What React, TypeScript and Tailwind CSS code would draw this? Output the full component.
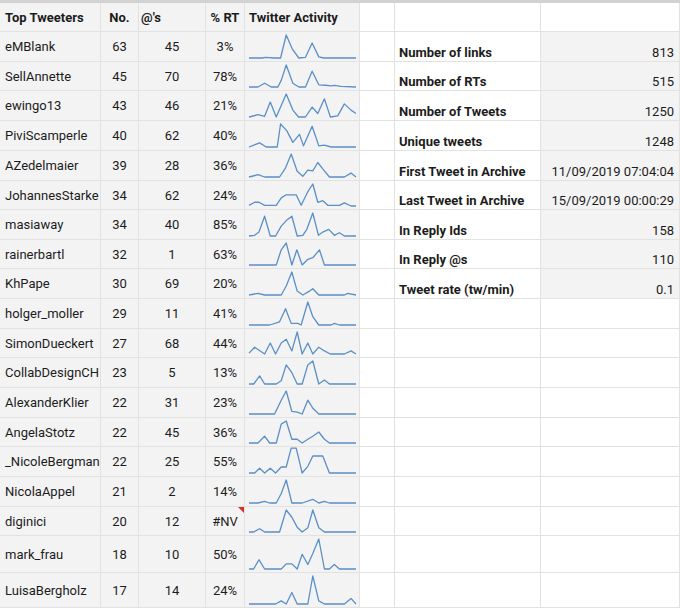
import type { ReactNode } from 'react';

type Tweeter = {
  name: string;
  no: number;
  ats: number;
  rt: string;
  h: string;
  pts: [number, number][];
  flag?: boolean;
};

const COLS =
  'grid grid-cols-[101px_38px_67px_39px_115px_35px_146px_139px]';

const TWEETERS: Tweeter[] = [
  { name: 'eMBlank', no: 63, ats: 45, rt: '3%', h: 'h-[30px]', pts: [[0, 0], [40, 0], [50, 0.03], [75, 0], [95, 0], [112, 1], [130, 0.4], [150, 0], [170, 0.03], [190, 0.65], [210, 0.05], [225, 0], [322, 0]] },
  { name: 'SellAnnette', no: 45, ats: 70, rt: '78%', h: 'h-[29px]', pts: [[0, 0], [27, 0], [47, 0.17], [67, 0], [87, 0], [97, 0.3], [112, 1], [132, 0.17], [150, 0], [170, 0], [190, 0.72], [210, 0.1], [230, 0.08], [247, 0.05], [257, 0.07], [277, 0.03], [322, 0]] },
  { name: 'ewingo13', no: 43, ats: 46, rt: '21%', h: 'h-[30px]', pts: [[0, 0], [27, 0.1], [47, 0.03], [64, 0.65], [82, 0], [112, 1], [132, 0.3], [149, 0], [170, 0], [190, 0.43], [207, 0.15], [227, 0.79], [245, 0], [267, 0.05], [287, 0.57], [307, 0.3], [322, 0.15]] },
  { name: 'PiviScamperle', no: 40, ats: 62, rt: '40%', h: 'h-[30px]', pts: [[0, 0], [32, 0.18], [52, 0], [85, 0], [95, 1], [114, 0.7], [132, 0.2], [152, 0.55], [164, 0.05], [190, 0.9], [210, 0.05], [227, 0.08], [247, 0], [322, 0]] },
  { name: 'AZedelmaier', no: 39, ats: 28, rt: '36%', h: 'h-[30px]', pts: [[0, 0], [27, 0.1], [47, 0], [92, 0], [110, 0.4], [127, 1], [145, 0.25], [162, 0.03], [177, 0.3], [192, 0.27], [207, 0.63], [222, 0.35], [242, 0], [287, 0], [307, 0.17], [322, 0]] },
  { name: 'JohannesStarke', no: 34, ats: 62, rt: '24%', h: 'h-[29px]', pts: [[0, 0.03], [17, 0.17], [30, 0.17], [47, 0.03], [82, 0.03], [97, 0.37], [112, 0.51], [142, 0.51], [157, 0.03], [177, 0.65], [192, 1], [207, 0.17], [222, 0.24], [237, 0.03], [272, 0.03], [287, 0.14], [307, 0], [322, 0]] },
  { name: 'masiaway', no: 34, ats: 40, rt: '85%', h: 'h-[30px]', pts: [[0, 0], [17, 0.03], [30, 0.17], [47, 0.86], [64, 0], [80, 0], [97, 0.43], [112, 0.67], [129, 0.86], [145, 0], [162, 0.03], [174, 0.29], [192, 1], [209, 0.03], [222, 0.17], [240, 0.29], [257, 0.03], [272, 0.14], [287, 0], [322, 0]] },
  { name: 'rainerbartl', no: 32, ats: 1, rt: '63%', h: 'h-[29px]', pts: [[0, 0], [82, 0], [97, 0.69], [112, 1], [129, 0], [144, 0.69], [160, 0], [177, 0.26], [192, 0.33], [212, 0.69], [227, 0], [322, 0]] },
  { name: 'KhPape', no: 30, ats: 69, rt: '20%', h: 'h-[30px]', pts: [[0, 0], [27, 0.07], [47, 0], [97, 0], [112, 0.39], [129, 1], [145, 0.17], [162, 0], [182, 0.17], [192, 0.27], [210, 0], [287, 0], [297, 0.07], [322, 0]] },
  { name: 'holger_moller', no: 29, ats: 11, rt: '41%', h: 'h-[30px]', pts: [[0, 0], [62, 0], [92, 0.14], [110, 0.71], [127, 0.07], [147, 0.07], [157, 0], [177, 1], [192, 0.36], [210, 0], [247, 0], [257, 0.07], [272, 0], [322, 0]] },
  { name: 'SimonDueckert', no: 27, ats: 68, rt: '44%', h: 'h-[29px]', pts: [[0, 0.04], [17, 0.31], [47, 0], [64, 0.5], [80, 0], [97, 0.5], [112, 0.67], [129, 0.14], [145, 1], [160, 0], [177, 0.5], [192, 0], [210, 0.31], [227, 0.14], [245, 0], [287, 0], [307, 0.14], [322, 0]] },
  { name: 'CollabDesignCH', no: 23, ats: 5, rt: '13%', h: 'h-[30px]', pts: [[0, 0], [14, 0], [32, 0.35], [47, 0], [82, 0], [97, 0.14], [112, 0.83], [129, 0.49], [145, 0], [160, 0], [177, 0.83], [192, 1], [210, 0], [227, 0.17], [242, 0], [322, 0]] },
  { name: 'AlexanderKlier', no: 22, ats: 31, rt: '23%', h: 'h-[30px]', pts: [[0, 0], [77, 0], [97, 0.6], [112, 1], [129, 0.11], [145, 0.08], [160, 0], [177, 0.6], [192, 0.25], [210, 0], [322, 0]] },
  { name: 'AngelaStotz', no: 22, ats: 45, rt: '36%', h: 'h-[29px]', pts: [[0, 0], [27, 0], [47, 0.31], [62, 0], [82, 0], [97, 0.86], [112, 1], [129, 0.17], [145, 0.17], [160, 0], [177, 0.17], [192, 0.31], [210, 0.5], [227, 0.17], [242, 0], [322, 0]] },
  { name: '_NicoleBergmann', no: 22, ats: 25, rt: '55%', h: 'h-[30px]', pts: [[0, 0], [17, 0], [32, 0.21], [47, 0], [64, 0.21], [80, 0], [97, 0.26], [112, 0.26], [127, 1.08], [142, 1.08], [160, 0], [177, 0.29], [192, 0.74], [222, 0.74], [242, 0], [322, 0]] },
  { name: 'NicolaAppel', no: 21, ats: 2, rt: '14%', h: 'h-[30px]', pts: [[0, 0], [27, 0], [47, 0.07], [62, 0], [82, 0], [97, 0.41], [112, 1], [129, 0], [160, 0], [192, 0.16], [210, 0], [227, 0.07], [242, 0], [322, 0]] },
  { name: 'diginici', no: 20, ats: 12, rt: '#NV', h: 'h-[29px]', flag: true, pts: [[0, 0], [14, 0], [32, 0.15], [47, 0], [92, 0], [112, 1], [129, 0.67], [145, 0.22], [160, 0], [177, 0.19], [192, 1], [210, 0.19], [227, 0], [322, 0]] },
  { name: 'mark_frau', no: 18, ats: 10, rt: '50%', h: 'h-[37px]', pts: [[0, 0], [14, 0], [30, 0.31], [47, 0], [97, 0], [112, 0.17], [129, 0.17], [145, 0], [160, 0.49], [177, 0.15], [192, 0.52], [210, 1], [227, 0], [242, 0], [257, 0.15], [272, 0], [322, 0]] },
  { name: 'LuisaBergholz', no: 17, ats: 14, rt: '24%', h: 'h-[35px]', pts: [[0, 0], [80, 0], [97, 0.11], [112, 0], [129, 0.41], [145, 0], [177, 0], [192, 1], [210, 0.11], [227, 0], [287, 0], [307, 0.2], [322, 0]] },
];

const STATS: [string, string][] = [
  ['Number of links', '813'],
  ['Number of RTs', '515'],
  ['Number of Tweets', '1250'],
  ['Unique tweets', '1248'],
  ['First Tweet in Archive', '11/09/2019 07:04:04'],
  ['Last Tweet in Archive', '15/09/2019 00:00:29'],
  ['In Reply Ids', '158'],
  ['In Reply @s', '110'],
  ['Tweet rate (tw/min)', '0.1'],
];

function Cell({ className = '', children }: { className?: string; children?: ReactNode }) {
  return (
    <div
      className={`flex min-w-0 overflow-hidden whitespace-nowrap border-b border-r border-[#e2e2e2] ${className}`}
    >
      {children}
    </div>
  );
}

function Sparkline({ pts }: { pts: [number, number][] }) {
  const points = pts.map(([x, v]) => `${x},${(1 - v) * 100}`).join(' ');
  return (
    <svg
      viewBox="0 0 322 100"
      preserveAspectRatio="none"
      className="block h-full w-full overflow-visible"
    >
      <polyline
        points={points}
        fill="none"
        stroke="#5b8fca"
        strokeWidth={1.3}
        strokeLinejoin="round"
        vectorEffect="non-scaling-stroke"
      />
    </svg>
  );
}

function StatCells({ stat }: { stat?: [string, string] }) {
  return (
    <>
      <Cell className="bg-white" />
      <Cell className="items-end bg-white px-[4px] pb-[1px] font-bold">
        {stat?.[0]}
      </Cell>
      <Cell
        className={`items-end justify-end px-[5px] pb-[1px] ${stat ? 'bg-[#f3f3f3]' : 'bg-white'}`}
      >
        {stat?.[1]}
      </Cell>
    </>
  );
}

export default function App() {
  return (
    <div className="h-[610px] w-[680px] overflow-hidden bg-white font-['Roboto',sans-serif] text-[13px] leading-[15px] text-[#1c1c1c]">
      <div className="h-[3px] bg-[#d2d2d2]" />

      <div className={`${COLS} h-[29px]`}>
        <Cell className="items-center bg-[#f3f3f3] px-[5px] font-bold">Top Tweeters</Cell>
        <Cell className="items-center justify-center bg-[#f3f3f3] font-bold">No.</Cell>
        <Cell className="items-center bg-[#f3f3f3] px-[2px] font-bold">@'s</Cell>
        <Cell className="items-center justify-center bg-[#f3f3f3] font-bold">% RT</Cell>
        <Cell className="items-center bg-[#f3f3f3] px-[4px] font-bold">Twitter Activity</Cell>
        <StatCells />
      </div>

      {TWEETERS.map((t, i) => (
        <div key={t.name} className={`${COLS} ${t.h}`}>
          <Cell className="items-center bg-[#f3f3f3] px-[5px]">{t.name}</Cell>
          <Cell className="items-center justify-center bg-[#f3f3f3]">{t.no}</Cell>
          <Cell className="items-center justify-center bg-[#f3f3f3]">{t.ats}</Cell>
          <Cell className="relative items-center justify-center bg-[#f3f3f3]">
            {t.rt}
            {t.flag && (
              <span className="absolute right-0 top-0 h-0 w-0 border-l-[6px] border-t-[6px] border-l-transparent border-t-[#d93025]" />
            )}
          </Cell>
          <Cell className="bg-[#f3f3f3] pb-[3px] pl-[4px] pr-[3px] pt-[3px]">
            <Sparkline pts={t.pts} />
          </Cell>
          <StatCells stat={STATS[i]} />
        </div>
      ))}
    </div>
  );
}
